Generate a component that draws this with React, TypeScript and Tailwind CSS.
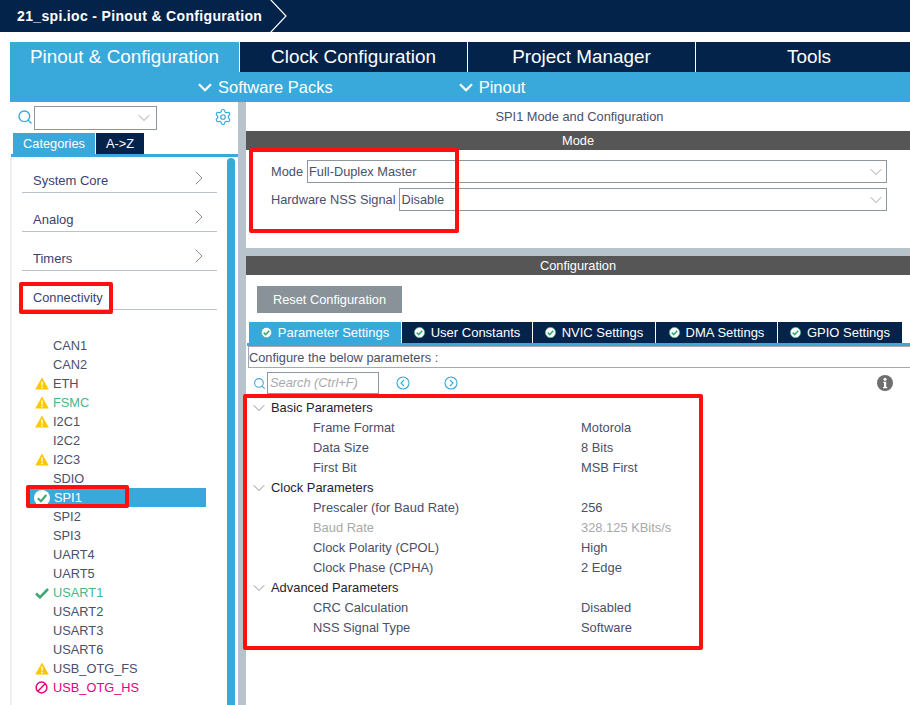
import { ChevronDown, ChevronRight, Search, Settings } from "lucide-react";

const navTabs = [
  { label: "Clock Configuration", width: "w-[228px]" },
  { label: "Project Manager", width: "w-[228px]" },
  { label: "Tools", width: "flex-1 pl-[12px]" },
];

const categories = ["System Core", "Analog", "Timers"];

type Status = "none" | "warn" | "ok" | "ban" | "selected";

const pins: { name: string; status: Status; color?: string }[] = [
  { name: "CAN1", status: "none" },
  { name: "CAN2", status: "none" },
  { name: "ETH", status: "warn" },
  { name: "FSMC", status: "warn", color: "text-[#4cb58a]" },
  { name: "I2C1", status: "warn" },
  { name: "I2C2", status: "none" },
  { name: "I2C3", status: "warn" },
  { name: "SDIO", status: "none" },
  { name: "SPI1", status: "selected", color: "text-white" },
  { name: "SPI2", status: "none" },
  { name: "SPI3", status: "none" },
  { name: "UART4", status: "none" },
  { name: "UART5", status: "none" },
  { name: "USART1", status: "ok", color: "text-[#4cb58a]" },
  { name: "USART2", status: "none" },
  { name: "USART3", status: "none" },
  { name: "USART6", status: "none" },
  { name: "USB_OTG_FS", status: "warn" },
  { name: "USB_OTG_HS", status: "ban", color: "text-[#e6007e]" },
];

const configTabs = [
  { label: "Parameter Settings", width: "w-[152px]", active: true },
  { label: "User Constants", width: "w-[130px]" },
  { label: "NVIC Settings", width: "w-[122px]" },
  { label: "DMA Settings", width: "w-[121px]" },
  { label: "GPIO Settings", width: "w-[124px]" },
];

const params = [
  {
    group: "Basic Parameters",
    rows: [
      ["Frame Format", "Motorola"],
      ["Data Size", "8 Bits"],
      ["First Bit", "MSB First"],
    ],
  },
  {
    group: "Clock Parameters",
    rows: [
      ["Prescaler (for Baud Rate)", "256"],
      ["Baud Rate", "328.125 KBits/s"],
      ["Clock Polarity (CPOL)", "High"],
      ["Clock Phase (CPHA)", "2 Edge"],
    ],
  },
  {
    group: "Advanced Parameters",
    rows: [
      ["CRC Calculation", "Disabled"],
      ["NSS Signal Type", "Software"],
    ],
  },
];

const StatusIcon = ({ status }: { status: Status }) => {
  if (status === "warn") {
    return (
      <svg viewBox="0 0 14 13" className="w-[14px] h-[13px]">
        <path d="M7 .5 13.8 12.5H.2Z" fill="#fbc800" />
        <path d="M6.2 4.5h1.6l-.3 4.5h-1ZM6.2 9.8h1.6v1.5H6.2Z" fill="#fff" />
      </svg>
    );
  }
  if (status === "ok") {
    return (
      <svg viewBox="0 0 14 12" className="w-[14px] h-[12px]">
        <path d="M1 6.5 5 10.3 13 2" fill="none" stroke="#3fa873" strokeWidth="2.6" />
      </svg>
    );
  }
  if (status === "ban") {
    return (
      <svg viewBox="0 0 14 14" className="w-[13px] h-[13px]">
        <circle cx="7" cy="7" r="5.8" fill="none" stroke="#e6007e" strokeWidth="1.6" />
        <path d="M3 11 11 3" stroke="#e6007e" strokeWidth="1.6" />
      </svg>
    );
  }
  if (status === "selected") {
    return (
      <svg viewBox="0 0 16 16" className="w-4 h-4 shrink-0">
        <circle cx="8" cy="8" r="8" fill="#fff" />
        <path d="M3.8 8.2 7 11.2 12.3 5" fill="none" stroke="#3fa873" strokeWidth="2.2" />
      </svg>
    );
  }
  return null;
};

const TabCheck = () => (
  <svg viewBox="0 0 12 12" className="w-[11px] h-[11px] shrink-0">
    <circle cx="6" cy="6" r="5.6" fill="#fff" stroke="#39a879" strokeWidth="0.8" />
    <path d="M3 6.2 5.2 8.3 9 4" fill="none" stroke="#39a879" strokeWidth="1.7" />
  </svg>
);

const NavArrow = ({ d }: { d: string }) => (
  <svg viewBox="0 0 14 14" className="w-[14px] h-[14px]">
    <circle cx="7" cy="7" r="6" fill="none" stroke="#39a9db" strokeWidth="1.1" />
    <path d={d} fill="none" stroke="#39a9db" strokeWidth="1.1" />
  </svg>
);

const BarChevron = () => (
  <svg viewBox="0 0 14 9" className="w-[14px] h-[9px] shrink-0">
    <path d="M1 1.2 7 7.2 13 1.2" fill="none" stroke="#fff" strokeWidth="2.2" />
  </svg>
);

const SelectBox = ({ value, className }: { value: string; className: string }) => (
  <div className={`h-[23px] border border-[#8f979e] flex items-center justify-between pl-[1px] ${className}`}>
    <span>{value}</span>
    <ChevronDown className="w-5 h-5 text-[#8a8f94]" strokeWidth={1} />
  </div>
);

const SectionBar = ({ title }: { title: string }) => (
  <div className="h-[19px] bg-[#555655] text-white leading-[19px] text-center">{title}</div>
);

const RedBox = ({ className }: { className: string }) => (
  <div className={`absolute border-4 border-[#ff1010] rounded-[2px] pointer-events-none ${className}`} />
);

export default function App() {
  return (
    <div className="relative w-[910px] h-[705px] overflow-hidden bg-white font-['Liberation_Sans',Arial,sans-serif] text-[12.8px] text-[#4a4f6a]">
      <header className="relative h-8 bg-[#03234b] text-white">
        <div className="pl-[17px] text-[14px] leading-[32px] font-bold tracking-[0.34px]">21_spi.ioc - Pinout &amp; Configuration</div>
        <svg viewBox="0 0 20 32" className="absolute left-[269px] top-0 w-5 h-8">
          <path d="M1 -1 17 16 1 33" fill="none" stroke="#fff" strokeWidth="1.2" />
        </svg>
      </header>

      <div className="ml-[10px] mt-[10px]">
        <nav className="flex h-[30px] text-white text-[18.9px] leading-[30px] text-center">
          <div className="w-[229px] bg-[#39a9db]">Pinout &amp; Configuration</div>
          {navTabs.map((tab) => (
            <div key={tab.label} className={`${tab.width} bg-[#03234b] border-l border-white`}>
              {tab.label}
            </div>
          ))}
        </nav>
        <div className="h-[30px] bg-[#39a9db] text-white text-[16.5px] flex items-center">
          <div className="flex items-center ml-[188px] gap-[6px]">
            <BarChevron />
            Software Packs
          </div>
          <div className="flex items-center ml-[126px] gap-[6px]">
            <BarChevron />
            Pinout
          </div>
        </div>
      </div>

      <div className="flex ml-[10px] h-[603px]">
        <aside className="w-[228px] shrink-0 flex flex-col">
          <div className="flex items-center h-[28px] mt-[2px] pl-[7px]">
            <Search className="w-4 h-4 -mt-[2px] text-[#39a9db]" strokeWidth={2} />
            <div className="ml-[1px] w-[123px] h-[24px] border border-[#8f979e] flex items-center justify-end pr-[2px]">
              <ChevronDown className="w-5 h-5 text-[#8a8f94]" strokeWidth={1} />
            </div>
            <Settings className="ml-[57px] -mt-[2px] w-[18px] h-[18px] text-[#39a9db]" strokeWidth={1.6} />
          </div>
          <div className="flex h-[21px] mt-[1px] pl-[3px] gap-[1px] leading-[21px]">
            <div className="w-[82px] bg-[#39a9db] text-white text-center">Categories</div>
            <div className="w-[48px] bg-[#03234b] text-white text-center">A-&gt;Z</div>
          </div>
          <div className="ml-[1px] h-[3px] bg-[#39a9db]" />
          <div className="flex-1 flex border-l-2 border-[#efefef]">
            <div className="w-[215px] pl-[10px]">
              {categories.map((name) => (
                <div key={name} className="mt-[19px] first:mt-[16px] w-[195px] h-[20px] border-b border-[#b7c4cb] flex justify-between items-start pl-[11px] pr-[6px] text-[13px] text-[#3a3f70]">
                  <span className="leading-[16px]">{name}</span>
                  <ChevronRight className="w-6 h-6 -mt-[7px] text-[#8a8f94]" strokeWidth={1} />
                </div>
              ))}
              <div className="mt-[19px] w-[195px] h-[20px] border-b border-[#b7c4cb] pl-[11px] leading-[16px] text-[#3a3f70]">Connectivity</div>
              <ul className="mt-[26px] ml-[8px]">
                {pins.map((pin) => (
                  <li key={pin.name} className={`flex items-center h-[19px] pl-[4px] ${pin.status === "selected" ? "bg-[#39a9db] w-[176px]" : ""}`}>
                    <span className="w-[15px] mr-[4px] flex justify-center shrink-0">
                      <StatusIcon status={pin.status} />
                    </span>
                    <span className={`${pin.status === "selected" ? "ml-[1px]" : ""} ${pin.color ?? "text-[#4a4f6a]"}`}>{pin.name}</span>
                  </li>
                ))}
              </ul>
            </div>
            <div className="w-2 mt-[1px] bg-[#39a9db] rounded-t-[4px]" />
          </div>
        </aside>

        <div className="w-2 shrink-0 bg-[#b7c4cb]" />

        <main className="flex-1 min-w-0 flex flex-col">
          <div className="h-[29px] text-center leading-[29px] pl-[3px]">SPI1 Mode and Configuration</div>
          <SectionBar title="Mode" />
          <div className="h-[98px] pt-[10px] pl-[25px] pr-[23px]">
            <div className="flex items-center gap-[4px]">
              <span>Mode</span>
              <SelectBox value="Full-Duplex Master" className="flex-1" />
            </div>
            <div className="flex items-center gap-[4px] mt-[5px]">
              <span>Hardware NSS Signal</span>
              <SelectBox value="Disable" className="flex-1" />
            </div>
          </div>
          <div className="h-2 bg-[#b7c4cb]" />
          <SectionBar title="Configuration" />
          <button className="mt-[11px] ml-[11px] w-[145px] h-[27px] bg-[#8a9299] text-white">Reset Configuration</button>
          <div className="flex mt-[9px] h-[21px] pl-[3px] gap-[1px] text-[13px]">
            {configTabs.map((tab) => (
              <div key={tab.label} className={`${tab.width} ${tab.active ? "bg-[#39a9db]" : "bg-[#03234b]"} text-white flex items-center justify-center gap-[6px]`}>
                <TabCheck />
                {tab.label}
              </div>
            ))}
          </div>
          <div className="ml-[1px] h-[3px] bg-[#39a9db]" />
          <div className="ml-[2px] h-[22px] border border-r-0 border-[#a5a9ad] leading-[21px]">Configure the below parameters :</div>
          <div className="flex items-center mt-[4px] h-[22px] pl-[7px]">
            <Search className="w-[13px] h-[13px] text-[#39a9db]" strokeWidth={2} />
            <div className="ml-[1px] w-[112px] h-[22px] border border-[#8f979e] pl-[2px] italic leading-[20px] text-[#a5a9ad]">Search (Ctrl+F)</div>
            <span className="ml-[17px] flex"><NavArrow d="M8 4 5 7l3 3" /></span>
            <span className="ml-[34px] flex"><NavArrow d="M6 4l3 3-3 3" /></span>
            <svg viewBox="0 0 16 16" className="ml-auto mr-[17px] w-4 h-4">
              <circle cx="8" cy="8" r="8" fill="#6e6e6e" />
              <circle cx="8" cy="4.2" r="1.5" fill="#fff" />
              <path d="M6.3 6.8h2.9v5.2h1v1.2H6v-1.2h1V8h-.7Z" fill="#fff" />
            </svg>
          </div>
          <div className="pt-[4px] text-[12.9px]">
            {params.map((section) => (
              <div key={section.group}>
                <div className="flex items-center h-5 pl-[3px] text-[#1e2433]">
                  <ChevronDown className="w-5 h-5 text-[#777c82]" strokeWidth={1} />
                  <span className="ml-[2px]">{section.group}</span>
                </div>
                {section.rows.map(([name, value]) => (
                  <div key={name} className={`flex h-5 leading-5 pl-[67px] ${name === "Baud Rate" ? "text-[#a5a9ad]" : ""}`}>
                    <span className="w-[268px]">{name}</span>
                    <span>{value}</span>
                  </div>
                ))}
              </div>
            ))}
          </div>
        </main>
      </div>

      <RedBox className="left-[249px] top-[148px] w-[210px] h-[85px]" />
      <RedBox className="left-[19px] top-[282px] w-[94px] h-[32px]" />
      <RedBox className="left-[26px] top-[485px] w-[103px] h-[23px]" />
      <RedBox className="left-[243px] top-[394px] w-[460px] h-[256px]" />
    </div>
  );
}
